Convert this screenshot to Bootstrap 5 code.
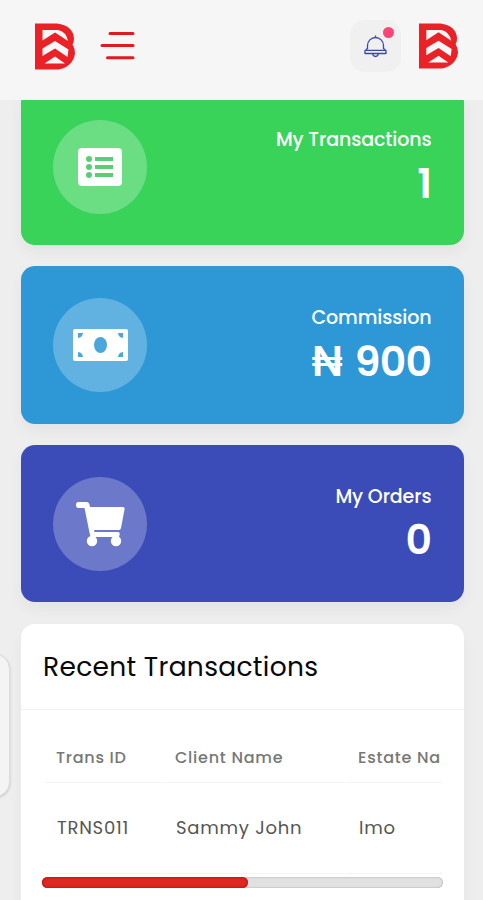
<!DOCTYPE html>
<html lang="en">
<head>
<meta charset="utf-8">
<meta name="viewport" content="width=device-width, initial-scale=1">
<title>Dashboard</title>
<link href="https://cdn.jsdelivr.net/npm/bootstrap@5.3.0/dist/css/bootstrap.min.css" rel="stylesheet">
<style>
  body { background: #eee; font-family: Poppins, Inter, "Open Sans", sans-serif; height: 900px; overflow: hidden; }
  .topbar { height: 100px; background: #f6f6f6; padding: 0 24px 8px 34px; z-index: 10; }
  .bell-btn { width: 51px; height: 52px; border-radius: 15px; background: #f0f0f1; margin-right: 17px; }
  .bell-dot { width: 11px; height: 11px; background: #fb4578; top: 7px; right: 7px; }
  .page { padding: 0 19.5px 0 21px; margin-top: -12px; gap: 21.2px; }
  .stat { height: 157.3px; border-radius: 14px; padding: 0 32px; box-shadow: 0 7px 14px rgba(60,60,70,.06); }
  .stat-green { background: #3ad35a; }
  .stat-blue { background: #2e98d7; }
  .stat-indigo { background: #3b4cb8; }
  .disc { width: 94px; height: 94px; background: rgba(255,255,255,.25); }
  .stat-label { font-size: 19px; line-height: 28px; font-weight: 500; letter-spacing: -.1px; margin-top: 38px; }
  .stat-value { font-size: 41px; line-height: 50px; font-weight: 600; letter-spacing: -.6px; word-spacing: 3.5px; margin-top: 4.500px; }
  .panel { border-radius: 14px; height: 320px; margin-top: .8px; box-shadow: 0 7px 14px rgba(60,60,70,.04); }
  .panel-head { height: 86px; border-bottom: 1.5px solid #f3f3f3; padding: 0 22px; }
  .panel-title { font-size: 26.5px; letter-spacing: .3px; color: #080808; font-weight: 400; }
  .scroller { margin: 21px 22px 0 21.5px; height: 144px; }
  .trans { width: 520px; table-layout: fixed; border-collapse: separate; border-spacing: 2px 0; white-space: nowrap; }
  .trans th, .trans td { border-bottom: 1.5px solid #f3f3f3; vertical-align: middle; }
  .trans th { height: 52px; padding: 2px 0 0 11.5px; font-size: 16px; font-weight: 500; letter-spacing: .75px; color: #777; }
  .trans td { height: 91px; padding: 0 0 1px 12.5px; font-size: 18px; letter-spacing: .75px; color: #555; }
  .c-id { width: 117px; } .c-client { width: 181px; }
  .track { height: 11px; margin: 2px 21px 0; border-radius: 6px; background: #e1e1e1; box-shadow: inset 0 0 2px #999; }
  .thumb { border-radius: 6px; background: #df2721; width: 206px; box-shadow: inset 0 0 3px #a00; }
  .side-tab { left: -20px; top: 654px; width: 30px; height: 143px; border-radius: 15px; background: #f4f4f4; border: 1px solid #ddd; box-shadow: 0 1px 3px rgba(0,0,0,.18); }
</style>
<script src="https://cdn.jsdelivr.net/npm/bootstrap@5.3.0/dist/js/bootstrap.bundle.min.js"></script>
</head>
<body>
<svg class="d-none">
  <symbol id="logo" viewBox="0 0 42 48">
    <path fill="#ea2127" fill-rule="evenodd" d="M1 1H23Q39 3 40 16Q40 20 38.500 22Q41 26 41 31Q39 44 25 47H1Z M8.500 7.500V18L21 10L34 18.500Q32 9 24 7.500Z M8.500 26V33.500L21 26L33.500 34.500L34.500 27L21 18.500Z M10.500 41H31L21 34Z"/>
  </symbol>
</svg>
<header class="topbar position-relative d-flex align-items-center">
  <svg width="42" height="49"><use href="#logo"/></svg>
  <svg class="ms-4" width="36" height="32" viewBox="0 0 36 32" fill="none" stroke="#e01a1f" stroke-width="3" stroke-linecap="round"><path d="M10 3.500H33M2 15.500H33M7.500 27.700H33"/></svg>
  <div class="bell-btn position-relative ms-auto d-flex align-items-center justify-content-center">
    <svg width="24" height="24" viewBox="0 0 24 24" fill="none" stroke="#3948ac" stroke-width="1.300" stroke-linejoin="round"><path d="M11.500 1.500V3.500M3.500 15V11.500A8 8 0 0 1 19.500 11.500V15M3.500 14Q3 15.500 1 16.500V19.500H22V16.500Q20 15.500 19.500 14M2 16.300H21.500M8.500 19.500Q9 22.500 11.500 22.500T14.500 19.500"/></svg>
    <span class="bell-dot position-absolute rounded-circle"></span>
  </div>
  <svg width="41" height="48"><use href="#logo"/></svg>
</header>
<main class="page d-flex flex-column">
  <section class="stat stat-green d-flex justify-content-between text-white">
    <div class="disc rounded-circle d-flex align-items-center justify-content-center align-self-center">
      <svg width="44" height="38" viewBox="0 0 44 38"><rect width="44" height="38" rx="4" fill="#fff"/><g fill="#59cf75"><circle cx="11" cy="11" r="3"/><circle cx="11" cy="19" r="3"/><circle cx="11" cy="27" r="3"/><path d="M17 9H35V13H17ZM17 17H35V21H17ZM17 25H35V29H17Z"/></g></svg>
    </div>
    <div class="text-end"><div class="stat-label">My Transactions</div><div class="stat-value">1</div></div>
  </section>
  <section class="stat stat-blue d-flex justify-content-between text-white">
    <div class="disc rounded-circle d-flex align-items-center justify-content-center align-self-center">
      <svg width="55" height="32" viewBox="0 0 55 32"><rect width="55" height="32" rx="2" fill="#fff"/><g fill="#4ba6dc"><ellipse cx="27.500" cy="16" rx="6.500" ry="8"/><path d="M5 4H10Q9.500 8.500 5 9ZM50 4H45Q45.500 8.500 50 9ZM5 28H10Q9.500 23.500 5 23ZM50 28H45Q45.500 23.500 50 23Z"/></g></svg>
    </div>
    <div class="text-end"><div class="stat-label">Commission</div><div class="stat-value">₦ 900</div></div>
  </section>
  <section class="stat stat-indigo d-flex justify-content-between text-white">
    <div class="disc rounded-circle d-flex align-items-center justify-content-center align-self-center">
      <svg width="50" height="46" viewBox="0 0 50 46" fill="#fff"><path d="M3.500 1H12Q14 1 14.500 3.500L15 6H48Q50 6 49.500 8.500L46 27Q45.500 29 44 29H19L19.500 31H43Q45 31 44.700 33L44 36H17Q15.500 36 15 34L9.500 7H3.500Q1 7 1 4T3.500 1Z"/><circle cx="17" cy="40" r="5.200"/><circle cx="41" cy="40" r="5.200"/></svg>
    </div>
    <div class="text-end"><div class="stat-label">My Orders</div><div class="stat-value">0</div></div>
  </section>
  <section class="panel bg-white">
    <div class="panel-head d-flex align-items-center"><h2 class="panel-title mb-0">Recent Transactions</h2></div>
    <div class="scroller overflow-hidden">
      <table class="trans">
        <colgroup><col class="c-id"><col class="c-client"><col></colgroup>
        <thead><tr><th>Trans ID</th><th>Client Name</th><th>Estate Na</th></tr></thead>
        <tbody><tr><td>TRNS011</td><td>Sammy John</td><td>Imo</td></tr></tbody>
      </table>
    </div>
    <div class="track d-flex"><div class="thumb"></div></div>
  </section>
</main>
<div class="side-tab position-absolute"></div>
</body>
</html>
